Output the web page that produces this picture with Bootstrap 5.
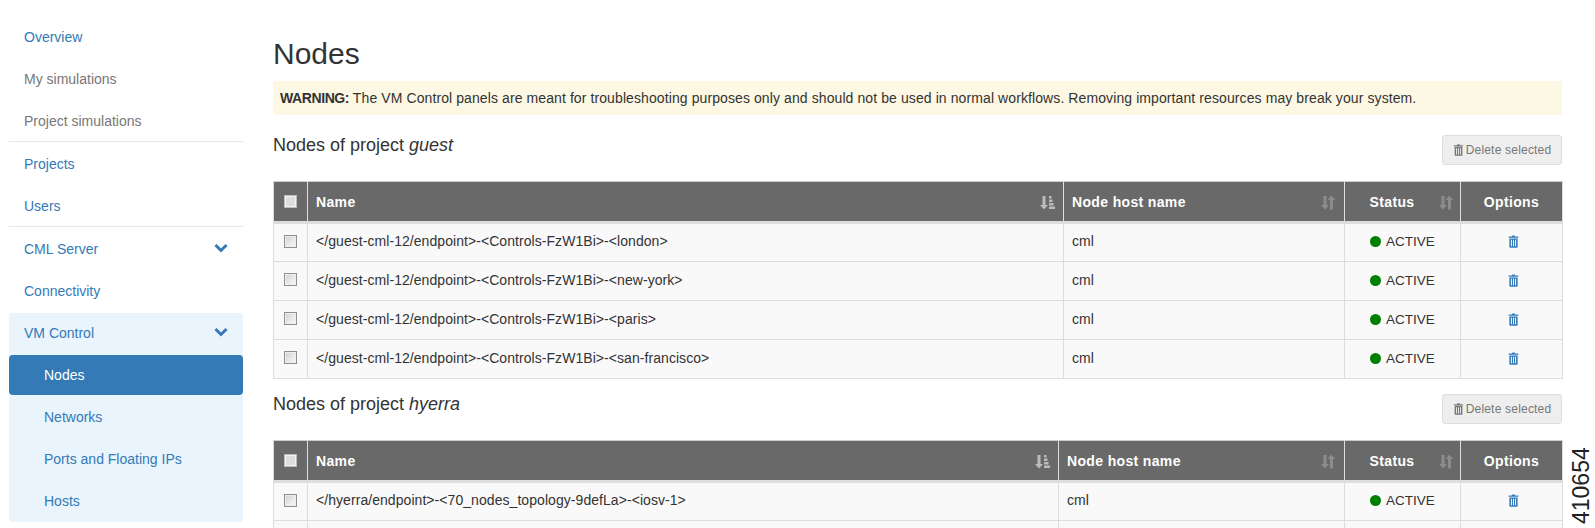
<!DOCTYPE html>
<html lang="en">
<head>
  <meta charset="UTF-8" />
  <title>Nodes</title>
  <link href="https://cdn.jsdelivr.net/npm/bootstrap@5.3.3/dist/css/bootstrap.min.css" rel="stylesheet">
  <style>
    html, body { height: 528px; overflow: hidden; }
    body { font-family: "Liberation Sans", Arial, sans-serif; font-size: 14px; color: #333; background: #fff; }
    .page-wrap { width: 1595px; height: 528px; overflow: hidden; position: relative; }
    .side-col { width: 273px; flex: none; padding: 16px 30px 0 9px; }
    .main-col { width: 1289px; flex: none; }
    .side-link { display: flex; justify-content: space-between; align-items: center; height: 42px; padding: 0 15px; color: #337ab7; text-decoration: none; }
    .side-link svg { margin-bottom: 3px; }
    .side-link.muted-link { color: #777; }
    .side-link.sub-link { padding-left: 35px; }
    .side-link.on { background: #337ab7; color: #fff; border-radius: 4px; height: 40px; }
    .side-sep { border-top: 1px solid #e7e7e7; margin: -1px 0 1px; height: 1px; }
    .side-group { background: #eaf4fc; border-radius: 4px; margin-top: 1px; }
    .side-group > .side-link:first-child { padding-bottom: 2px; }
    .side-group .side-link.on + .side-link { margin-top: 1px; }
    .page-title { font-size: 30px; font-weight: 400; line-height: 33px; margin: 37px 0 11px; color: #333; }
    .warn-box { background: #fcf8e3; height: 34px; padding: 0 7px; line-height: 34px; border-radius: 2px; margin-bottom: 20px; letter-spacing: .095px; }
    .warn-box strong { letter-spacing: -.4px; }
    .sec-head { height: 30px; margin-bottom: 16px; }
    .sec-head h4 { font-size: 18px; font-weight: 400; line-height: 20px; margin: 0; color: #333; position: relative; top: -5px; }
    .del-btn { width: 120px; height: 30px; padding: 0; font-size: 12px; color: #777; background: #eee; border: 1px solid #ddd; border-radius: 3px; display: flex; align-items: center; justify-content: center; gap: 2px; letter-spacing: .2px; }
    .nodes-tbl { table-layout: fixed; width: 1289px; border-collapse: collapse; margin: 0 0 15px; font-size: 14px; }
    .nodes-tbl th { background: #696969; color: #fff; height: 41px; padding: 2px 8px 0; font-size: 14px; font-weight: 700; letter-spacing: .35px; border: 1px solid #ddd; border-bottom: 3px solid #ddd; border-top-color: #ccc; position: relative; vertical-align: middle; }
    .nodes-tbl td { background: #f9f9f9; height: 39px; padding: 0 8px 2px; border: 1px solid #ddd; vertical-align: middle; color: #333; letter-spacing: .06px; }
    .nodes-tbl .ctr { text-align: center; padding: 0; }
    .nodes-tbl th.ctr { padding-top: 2px; }
    .nodes-tbl th.stat-head { padding-right: 21px; }
    .nodes-tbl td.trash-cell { padding: 0 0 3px 4px; color: #337ab7; }
    .box-mark { display: inline-block; width: 13px; height: 13px; vertical-align: middle; border: 1px solid #8f8f8f; background: linear-gradient(135deg, #d0d0d0, #fbfbfb); box-shadow: inset 0 0 0 1px #eee; position: relative; top: -2px; }
    th .box-mark { background: #ddd; border-color: #bbb; box-shadow: inset 0 0 0 1px #f3f3f3; }
    .sort-ico { position: absolute; right: 8px; top: 13px; }
    .stat-head .sort-ico { right: 6px; }
    .dot-on { display: inline-block; width: 11px; height: 11px; border-radius: 50%; background: green; vertical-align: -1px; margin-right: 5px; }
    .nodes-tbl td.stat-cell { font-size: 13.5px; padding: 0 0 0 25px; letter-spacing: 0; }
    .fig-num { position: absolute; left: 1543px; top: 474px; width: 76px; font-size: 23px; line-height: 24px; color: #222; transform: rotate(-90deg); text-align: center; }
  </style>
</head>
<body>
<svg width="0" height="0" class="d-block position-absolute">
  <defs>
    <symbol id="ico-trash" viewBox="0 0 12 14">
      <path d="M4.200 1.600 4.800.4h2.400l.6 1.200H11.300v1.300H.7V1.600zM1.500 3.600h9v9.100c0 .7-.5 1.100-1.100 1.100H2.600c-.6 0-1.100-.4-1.100-1.100zM3.200 5v7.300h1.100V5zM5.450 5v7.300h1.100V5zM7.700 5v7.300h1.100V5z" fill="currentColor" fill-rule="evenodd"/>
    </symbol>
    <symbol id="ico-chev" viewBox="0 0 14 10">
      <path d="M1.500 2 7 7.500 12.500 2" fill="none" stroke="currentColor" stroke-width="3"/>
    </symbol>
    <symbol id="ico-sort" viewBox="0 0 15 15">
      <path d="M2.500 1h3v9H8l-4 4.500L0 10h2.500z M10 .5 14.500 5H12v9.500H9V5H6.800z" fill="currentColor"/>
    </symbol>
    <symbol id="ico-sorted" viewBox="0 0 15 15">
      <path d="M2.500 1h3v9H8l-4 4.500L0 10h2.500z M9 1h2.500v2.500H9z M9 4.500h3.500v2.500H9z M9 8h4.500v2.500H9z M9 11.500h6V14H9z" fill="currentColor"/>
    </symbol>
  </defs>
</svg>

<div class="page-wrap d-flex">
  <div class="side-col">
    <a class="side-link" href="#">Overview</a>
    <a class="side-link muted-link" href="#">My simulations</a>
    <a class="side-link muted-link" href="#">Project simulations</a>
    <div class="side-sep"></div>
    <a class="side-link" href="#">Projects</a>
    <a class="side-link" href="#">Users</a>
    <div class="side-sep"></div>
    <a class="side-link" href="#">CML Server <svg width="14" height="10"><use href="#ico-chev"/></svg></a>
    <a class="side-link" href="#">Connectivity</a>
    <div class="side-group">
      <a class="side-link" href="#">VM Control <svg width="14" height="10"><use href="#ico-chev"/></svg></a>
      <a class="side-link sub-link on" href="#">Nodes</a>
      <a class="side-link sub-link" href="#">Networks</a>
      <a class="side-link sub-link" href="#">Ports and Floating IPs</a>
      <a class="side-link sub-link" href="#">Hosts</a>
    </div>
  </div>

  <div class="main-col">
    <h1 class="page-title">Nodes</h1>
    <div class="warn-box"><strong>WARNING:</strong> The VM Control panels are meant for troubleshooting purposes only and should not be used in normal workflows. Removing important resources may break your system.</div>

    <div class="sec-head d-flex justify-content-between align-items-center">
      <h4>Nodes of project <em>guest</em></h4>
      <button class="del-btn" type="button"><svg width="11" height="12"><use href="#ico-trash"/></svg>Delete selected</button>
    </div>
    <table class="nodes-tbl">
      <colgroup><col style="width:34px"><col style="width:756px"><col style="width:281px"><col style="width:116px"><col style="width:102px"></colgroup>
      <thead><tr>
        <th class="ctr"><span class="box-mark"></span></th>
        <th>Name<svg class="sort-ico" width="15" height="15" color="#bcbcbc"><use href="#ico-sorted"/></svg></th>
        <th>Node host name<svg class="sort-ico" width="15" height="15" color="#8c8c8c"><use href="#ico-sort"/></svg></th>
        <th class="ctr stat-head">Status<svg class="sort-ico" width="15" height="15" color="#8c8c8c"><use href="#ico-sort"/></svg></th>
        <th class="ctr">Options</th>
      </tr></thead>
      <tbody id="rowsGuest"></tbody>
    </table>

    <div class="sec-head d-flex justify-content-between align-items-center">
      <h4>Nodes of project <em>hyerra</em></h4>
      <button class="del-btn" type="button"><svg width="11" height="12"><use href="#ico-trash"/></svg>Delete selected</button>
    </div>
    <table class="nodes-tbl">
      <colgroup><col style="width:34px"><col style="width:751px"><col style="width:286px"><col style="width:116px"><col style="width:102px"></colgroup>
      <thead><tr>
        <th class="ctr"><span class="box-mark"></span></th>
        <th>Name<svg class="sort-ico" width="15" height="15" color="#bcbcbc"><use href="#ico-sorted"/></svg></th>
        <th>Node host name<svg class="sort-ico" width="15" height="15" color="#8c8c8c"><use href="#ico-sort"/></svg></th>
        <th class="ctr stat-head">Status<svg class="sort-ico" width="15" height="15" color="#8c8c8c"><use href="#ico-sort"/></svg></th>
        <th class="ctr">Options</th>
      </tr></thead>
      <tbody id="rowsHyerra"></tbody>
    </table>
  </div>
  <div class="fig-num">410654</div>
</div>

<script>
  const fill = (id, names) => {
    document.getElementById(id).innerHTML = names.map(n => {
      const label = n.replace(/</g, '&lt;').replace(/>/g, '&gt;');
      return `<tr><td class="ctr"><span class="box-mark"></span></td><td>${label}</td><td>${n ? 'cml' : ''}</td>` +
        `<td class="stat-cell">${n ? '<span class="dot-on"></span>ACTIVE' : ''}</td>` +
        `<td class="ctr trash-cell">${n ? '<svg width="11" height="13"><use href="#ico-trash"/></svg>' : ''}</td></tr>`;
    }).join('');
  };
  fill('rowsGuest', [
    '</guest-cml-12/endpoint>-<Controls-FzW1Bi>-<london>',
    '</guest-cml-12/endpoint>-<Controls-FzW1Bi>-<new-york>',
    '</guest-cml-12/endpoint>-<Controls-FzW1Bi>-<paris>',
    '</guest-cml-12/endpoint>-<Controls-FzW1Bi>-<san-francisco>'
  ]);
  fill('rowsHyerra', ['</hyerra/endpoint>-<70_nodes_topology-9defLa>-<iosv-1>', '']);
</script>
<script src="https://cdn.jsdelivr.net/npm/bootstrap@5.3.3/dist/js/bootstrap.bundle.min.js"></script>
</body>
</html>
